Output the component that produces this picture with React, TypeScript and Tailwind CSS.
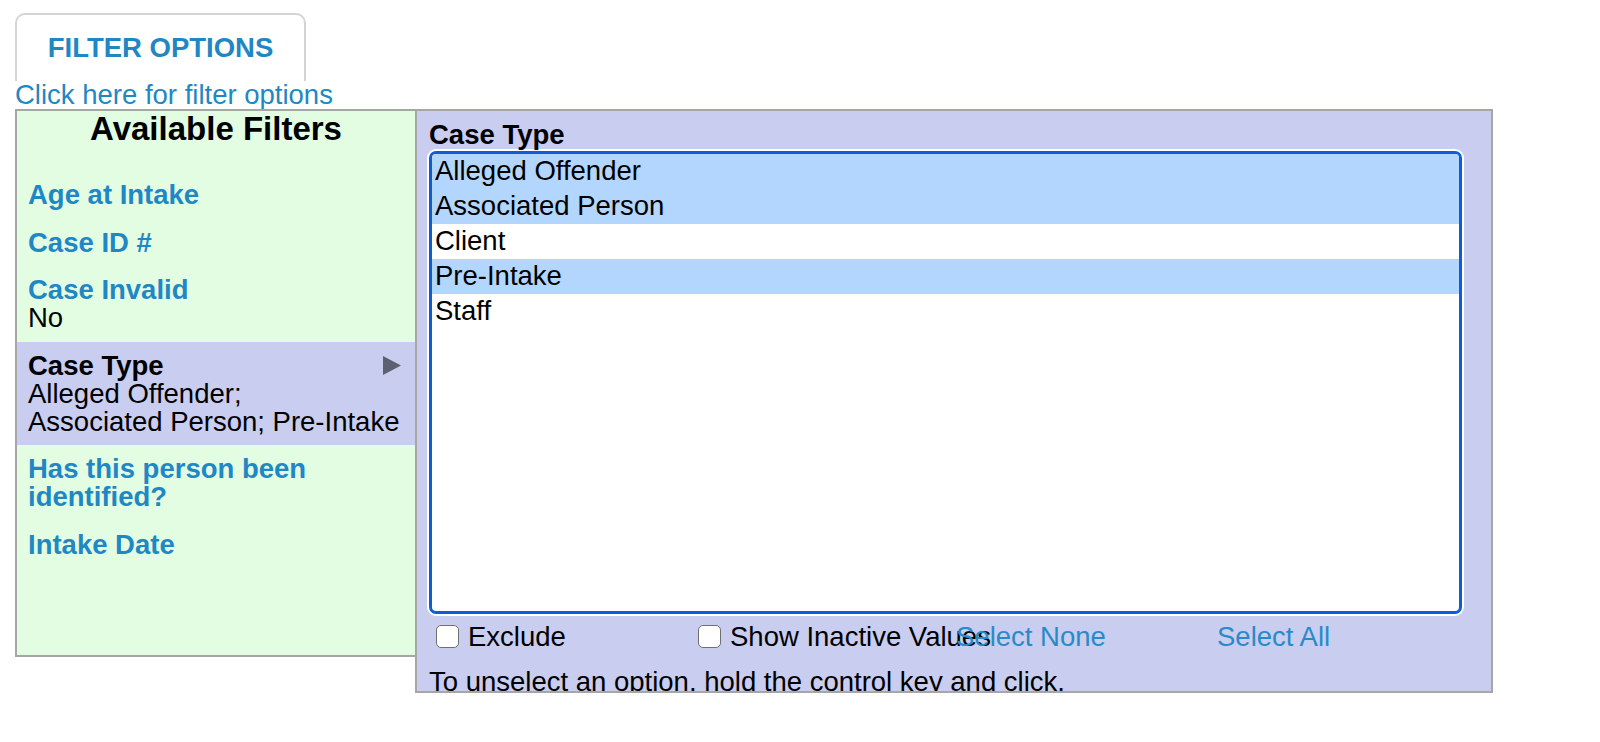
import React from "react";

type Item = { title: string; sub?: string[]; selected?: boolean };

const items: Item[] = [
  { title: "Age at Intake" },
  { title: "Case ID #" },
  { title: "Case Invalid", sub: ["No"] },
  { title: "Case Type", sub: ["Alleged Offender;", "Associated Person; Pre-Intake"], selected: true },
  { title: "Has this person been identified?" },
  { title: "Intake Date" },
];

const options = [
  { label: "Alleged Offender", selected: true },
  { label: "Associated Person", selected: true },
  { label: "Client", selected: false },
  { label: "Pre-Intake", selected: true },
  { label: "Staff", selected: false },
];

function Checkbox() {
  return <span className="inline-block h-[23px] w-[23px] shrink-0 rounded-[5px] border-[1.5px] border-[#6f6f6f] bg-white" />;
}

export default function App() {
  return (
    <div className="min-h-screen bg-white pl-[15px] pt-[13px] font-['Liberation_Sans',Arial,Helvetica,sans-serif] text-[27.5px] text-black">
      <div className="flex h-[68px] w-[291px] items-center justify-center rounded-t-[10px] border-2 border-b-0 border-[#d4d4d4] text-[27.5px] font-bold leading-none text-[#1f87c4]">
        FILTER OPTIONS
      </div>
      <div className="text-[27.5px] leading-[27.5px] text-[#1f87c4]">Click here for filter options</div>
      <div className="flex items-start">
        <div className="h-[548px] w-[400px] shrink-0 border-2 border-r-0 border-[#a6a6a6] bg-[#e3fde3]">
          <div className="mb-[25.5px] text-center text-[33px] font-bold leading-[35px]">Available Filters</div>
          {items.map((it) => (
            <div
              key={it.title}
              className={`pl-[11px] pr-[14px] pt-[10px] pb-[9.5px] leading-[28px] ${it.selected ? "bg-[#c9cdf0]" : ""}`}
            >
              <div className="flex items-center justify-between">
                <span className={`font-bold ${it.selected ? "text-black" : "text-[#1f87c4]"}`}>{it.title}</span>
                {it.selected && (
                  <svg width="18" height="19" viewBox="0 0 18 19" className="shrink-0">
                    <polygon points="0,0 18,9.5 0,19" fill="#5d606f" />
                  </svg>
                )}
              </div>
              {it.sub && it.sub.map((s) => <div key={s}>{s}</div>)}
            </div>
          ))}
        </div>
        <div className="h-[584px] w-[1078px] shrink-0 overflow-hidden border-2 border-[#a6a6a6] bg-[#c9cdf0] pl-[12px] pt-[10px]">
          <div className="font-bold leading-[28px]">Case Type</div>
          <div className="mt-[2px] h-[463px] w-[1033px] overflow-hidden rounded-[7px] border-[3px] border-[#0b5ed7] bg-white shadow-[0_0_0_2px_#ffffff]">
            {options.map((o) => (
              <div
                key={o.label}
                className={`h-[35px] pl-[3px] leading-[33px] ${o.selected ? "bg-[#b3d6fe]" : ""}`}
              >
                {o.label}
              </div>
            ))}
          </div>
          <div className="ml-[5px] mt-[2px] grid h-[35px] grid-cols-[261px_261px_261px_261px] items-center whitespace-nowrap">
            <div className="flex items-center pl-[2px]">
              <Checkbox />
              <span className="ml-[9px]">Exclude</span>
            </div>
            <div className="flex items-center pl-[3px]">
              <Checkbox />
              <span className="ml-[9px]">Show Inactive Values</span>
            </div>
            <div className="text-[#2a8ac8]">Select None</div>
            <div className="text-[#2a8ac8]">Select All</div>
          </div>
          <div className="mt-[17.5px] whitespace-nowrap leading-[28px]">
            To unselect an option, hold the control key and click.
          </div>
        </div>
      </div>
    </div>
  );
}
